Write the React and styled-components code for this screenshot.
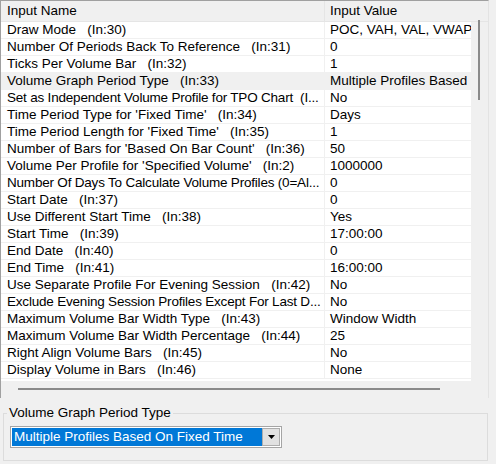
import React from 'react';
import styled, { createGlobalStyle } from 'styled-components';

const GlobalStyle = createGlobalStyle`
  html, body {
    margin: 0;
    padding: 0;
    background: #f0f0f0;
  }
  body {
    font-family: "Liberation Sans", Arial, sans-serif;
    font-size: 13.5px;
    color: #000;
  }
`;

// name column text is shown the way the grid cuts it
const rows = [
  ['Draw Mode   (In:30)', 'POC, VAH, VAL, VWAP'],
  ['Number Of Periods Back To Reference   (In:31)', '0'],
  ['Ticks Per Volume Bar   (In:32)', '1'],
  ['Volume Graph Period Type   (In:33)', 'Multiple Profiles Based', true],
  ['Set as Independent Volume Profile for TPO Chart  (I...', 'No'],
  ["Time Period Type for 'Fixed Time'   (In:34)", 'Days'],
  ["Time Period Length for 'Fixed Time'   (In:35)", '1'],
  ["Number of Bars for 'Based On Bar Count'   (In:36)", '50'],
  ["Volume Per Profile for 'Specified Volume'   (In:2)", '1000000'],
  ['Number Of Days To Calculate Volume Profiles (0=Al...', '0'],
  ['Start Date   (In:37)', '0'],
  ['Use Different Start Time   (In:38)', 'Yes'],
  ['Start Time   (In:39)', '17:00:00'],
  ['End Date   (In:40)', '0'],
  ['End Time   (In:41)', '16:00:00'],
  ['Use Separate Profile For Evening Session   (In:42)', 'No'],
  ['Exclude Evening Session Profiles Except For Last D...', 'No'],
  ['Maximum Volume Bar Width Type   (In:43)', 'Window Width'],
  ['Maximum Volume Bar Width Percentage   (In:44)', '25'],
  ['Right Align Volume Bars   (In:45)', 'No'],
  ['Display Volume in Bars   (In:46)', 'None'],
];

const Page = styled.div`
  width: 496px;
  height: 464px;
  display: flex;
  flex-direction: column;
  overflow: hidden;
`;

const ListPanel = styled.div`
  width: 487px;
  height: 397px;
  flex: none;
  border-top: 1px solid #a0a0a0;
  border-left: 1px solid #a0a0a0;
  border-right: 1px solid #e3e3e3;
  display: flex;
  flex-direction: column;
  box-sizing: content-box;
`;

const Header = styled.div`
  display: flex;
  height: 20px;
  border-bottom: 1px solid #e5e5e5;
  background: #f0f0f0;
`;

const HeaderCell = styled.div`
  width: ${({ $w }) => $w};
  flex: ${({ $grow }) => ($grow ? 1 : 'none')};
  padding-left: ${({ $pad }) => $pad};
  line-height: 20px;
  white-space: nowrap;
  border-right: ${({ $sep }) => ($sep ? '1px solid #e5e5e5' : 'none')};
  box-sizing: border-box;
`;

const Body = styled.div`
  display: flex;
  height: 359px;
`;

const Rows = styled.div`
  width: 470px;
  background: #fff;
  overflow: hidden;
`;

const Row = styled.div`
  display: flex;
  height: 17px;
  border-bottom: 1px solid #f0f0f0;
  background: ${({ $active }) => ($active ? '#f0f0f0' : '#fff')};
  box-sizing: border-box;
`;

const NameCell = styled.div`
  width: 324px;
  flex: none;
  padding-left: 6px;
  line-height: 16px;
  white-space: pre;
  overflow: hidden;
  letter-spacing: ${({ $tight }) => ($tight ? '-0.2px' : 'normal')};
  border-right: 1px solid #f0f0f0;
  box-sizing: border-box;
`;

const ValueCell = styled.div`
  flex: 1;
  padding-left: 5px;
  line-height: 16px;
  white-space: nowrap;
  overflow: hidden;
`;

const VScroll = styled.div`
  flex: 1;
  position: relative;
`;

const VThumb = styled.div`
  position: absolute;
  left: 7px;
  top: -2px;
  width: 2px;
  height: 80px;
  background: #8a8a8a;
`;

const HScroll = styled.div`
  height: 17px;
  position: relative;
`;

const HThumb = styled.div`
  position: absolute;
  left: 17px;
  top: 7px;
  width: 422px;
  height: 2px;
  background: #8a8a8a;
`;

const GroupBox = styled.div`
  position: relative;
  flex: none;
  margin: 15px 0 0 3px;
  width: 485px;
  height: 48px;
  padding: 12px 6px 0 6px;
  border: 1px solid #dcdcdc;
  box-sizing: border-box;
`;

const Legend = styled.span`
  position: absolute;
  top: -9px;
  left: 3px;
  padding: 0 2px;
  line-height: 16px;
  background: #f0f0f0;
`;

const Combo = styled.div`
  display: flex;
  width: 272px;
  height: 22px;
  border: 1px solid #a5a5a5;
  background: #fff;
  box-sizing: border-box;
  padding: 1px;
`;

const ComboText = styled.div`
  flex: 1;
  background: #0078d7;
  color: #fff;
  line-height: 18px;
  padding-left: 2px;
  white-space: nowrap;
  overflow: hidden;
`;

const ComboButton = styled.div`
  width: 18px;
  border: 1px solid #adadad;
  background: #e1e1e1;
  display: flex;
  align-items: center;
  justify-content: center;
  box-sizing: border-box;
`;

export default function App() {
  return (
    <Page>
      <GlobalStyle />
      <ListPanel>
        <Header>
          <HeaderCell $w="324px" $pad="6px" $sep>Input Name</HeaderCell>
          <HeaderCell $grow $pad="5px">Input Value</HeaderCell>
        </Header>
        <Body>
          <Rows>
            {rows.map(([name, value, active]) => (
              <Row key={name} $active={active}>
                <NameCell $tight={name.endsWith('...')}>{name}</NameCell>
                <ValueCell>{value}</ValueCell>
              </Row>
            ))}
          </Rows>
          <VScroll>
            <VThumb />
          </VScroll>
        </Body>
        <HScroll>
          <HThumb />
        </HScroll>
      </ListPanel>
      <GroupBox>
        <Legend>Volume Graph Period Type</Legend>
        <Combo>
          <ComboText>Multiple Profiles Based On Fixed Time</ComboText>
          <ComboButton>
            <svg width="7" height="4" viewBox="0 0 7 4">
              <path d="M0 0h7L3.5 4z" fill="#000" />
            </svg>
          </ComboButton>
        </Combo>
      </GroupBox>
    </Page>
  );
}
